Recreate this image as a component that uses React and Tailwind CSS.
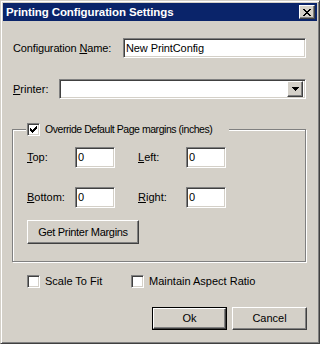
import React from 'react'

const sunken =
  'border border-t-[#808080] border-l-[#808080] border-r-white border-b-white shadow-[inset_1px_1px_#404040,inset_-1px_-1px_#d4d0c8] bg-white'
const raised =
  'border border-t-white border-l-white border-r-[#404040] border-b-[#404040] shadow-[inset_-1px_-1px_#808080] bg-[#d4d0c8]'

function Check({ checked }) {
  return (
    <span className={`${sunken} w-[13px] h-[13px] flex items-center justify-center shrink-0`}>
      {checked && (
        <svg width="7" height="7" viewBox="0 0 7 7" shapeRendering="crispEdges">
          <path d="M0 2h1v3h-1z M1 3h1v3h-1z M2 4h1v3h-1z M3 3h1v3h-1z M4 2h1v3h-1z M5 1h1v3h-1z M6 0h1v3h-1z" fill="#000" />
        </svg>
      )}
    </span>
  )
}

function Field({ label, mn, value = '0' }) {
  const rest = label.slice(1)
  return (
    <div className="flex items-center">
      <span className="w-[48px]">
        <u>{mn}</u>
        {rest}
      </span>
      <div className={`${sunken} w-[40px] h-[21px] pl-[2px] flex items-center`}>{value}</div>
    </div>
  )
}

export default function App() {
  return (
    <div
      className="w-[320px] h-[344px] bg-[#d4d0c8] border border-t-[#d4d0c8] border-l-[#d4d0c8] border-r-[#404040] border-b-[#404040] shadow-[inset_1px_1px_#fff,inset_-1px_-1px_#808080] p-[2px] text-[11px] leading-[13px] text-black"
      style={{ fontFamily: '"Liberation Sans", Arial, sans-serif' }}
    >
      {/* Title bar */}
      <div className="h-[18px] bg-[#0a246a] flex items-center justify-between pl-[3px] pr-[2px]">
        <span className="text-white font-bold text-[11.5px] tracking-[-0.1px]">Printing Configuration Settings</span>
        <button className={`${raised} w-[16px] h-[14px] flex items-center justify-center`}>
          <svg width="8" height="7" viewBox="0 0 8 7" shapeRendering="crispEdges">
            <path d="M0 0h2l2 2.5 2-2.5h2l-3 3.5 3 3.5h-2l-2-2.5-2 2.5h-2l3-3.5z" fill="#000" />
          </svg>
        </button>
      </div>

      <div className="pl-[10px] pr-[11px]">
        {/* Configuration name */}
        <div className="flex items-center justify-between mt-[17px]">
          <span className="tracking-[-0.15px]">
            Configuration <u>N</u>ame:
          </span>
          <div className={`${sunken} w-[183px] h-[20px] pl-[2px] flex items-center tracking-[-0.1px]`}>New PrintConfig</div>
        </div>

        {/* Printer */}
        <div className="flex items-center justify-between mt-[21px]">
          <span>
            <u>P</u>rinter:
          </span>
          <div className={`${sunken} w-[247px] h-[20px] flex items-center justify-end pr-[2px]`}>
            <div className={`${raised} w-[16px] h-[16px] flex items-center justify-center`}>
              <svg width="7" height="4" viewBox="0 0 7 4" shapeRendering="crispEdges">
                <path d="M0 0h7v1h-1v1h-1v1h-1v1h-1v-1h-1v-1h-1v-1h-1z" fill="#000" />
              </svg>
            </div>
          </div>
        </div>

        {/* Group box */}
        <div className="relative mt-[30px] -ml-[1px] w-[294px] h-[133px] border border-[#808080] shadow-[inset_1px_1px_#fff,1px_1px_#fff] pl-[14px] pt-[17px]">
          <div className="absolute -top-[7px] left-[13px] bg-[#d4d0c8] flex items-center gap-[5px] pl-[1px] pr-[17px] whitespace-nowrap">
            <Check checked />
            <span className="text-[10.5px] tracking-[-0.45px]">Override Default Page margins (inches)</span>
          </div>
          <div className="flex gap-[23px]">
            <Field label="Top:" mn="T" />
            <Field label="Left:" mn="L" />
          </div>
          <div className="flex gap-[23px] mt-[19px]">
            <Field label="Bottom:" mn="B" />
            <Field label="Right:" mn="R" />
          </div>
          <button className={`${raised} w-[112px] h-[24px] mt-[12px] flex items-center justify-center tracking-[-0.3px]`}>
            Get Printer Margins
          </button>
        </div>

        {/* Options */}
        <div className="flex items-center mt-[13px] pl-[14px]">
          <Check />
          <span className="ml-[5px] w-[86px]">Scale To Fit</span>
          <Check />
          <span className="ml-[5px]">Maintain Aspect Ratio</span>
        </div>

        {/* Buttons */}
        <div className="flex justify-end gap-[5px] mt-[19px] -mr-[1px]">
          <button className="w-[75px] h-[23px] border border-black">
            <span className={`${raised} w-full h-full flex items-center justify-center`}>Ok</span>
          </button>
          <button className={`${raised} w-[75px] h-[23px] flex items-center justify-center`}>Cancel</button>
        </div>
      </div>
    </div>
  )
}
